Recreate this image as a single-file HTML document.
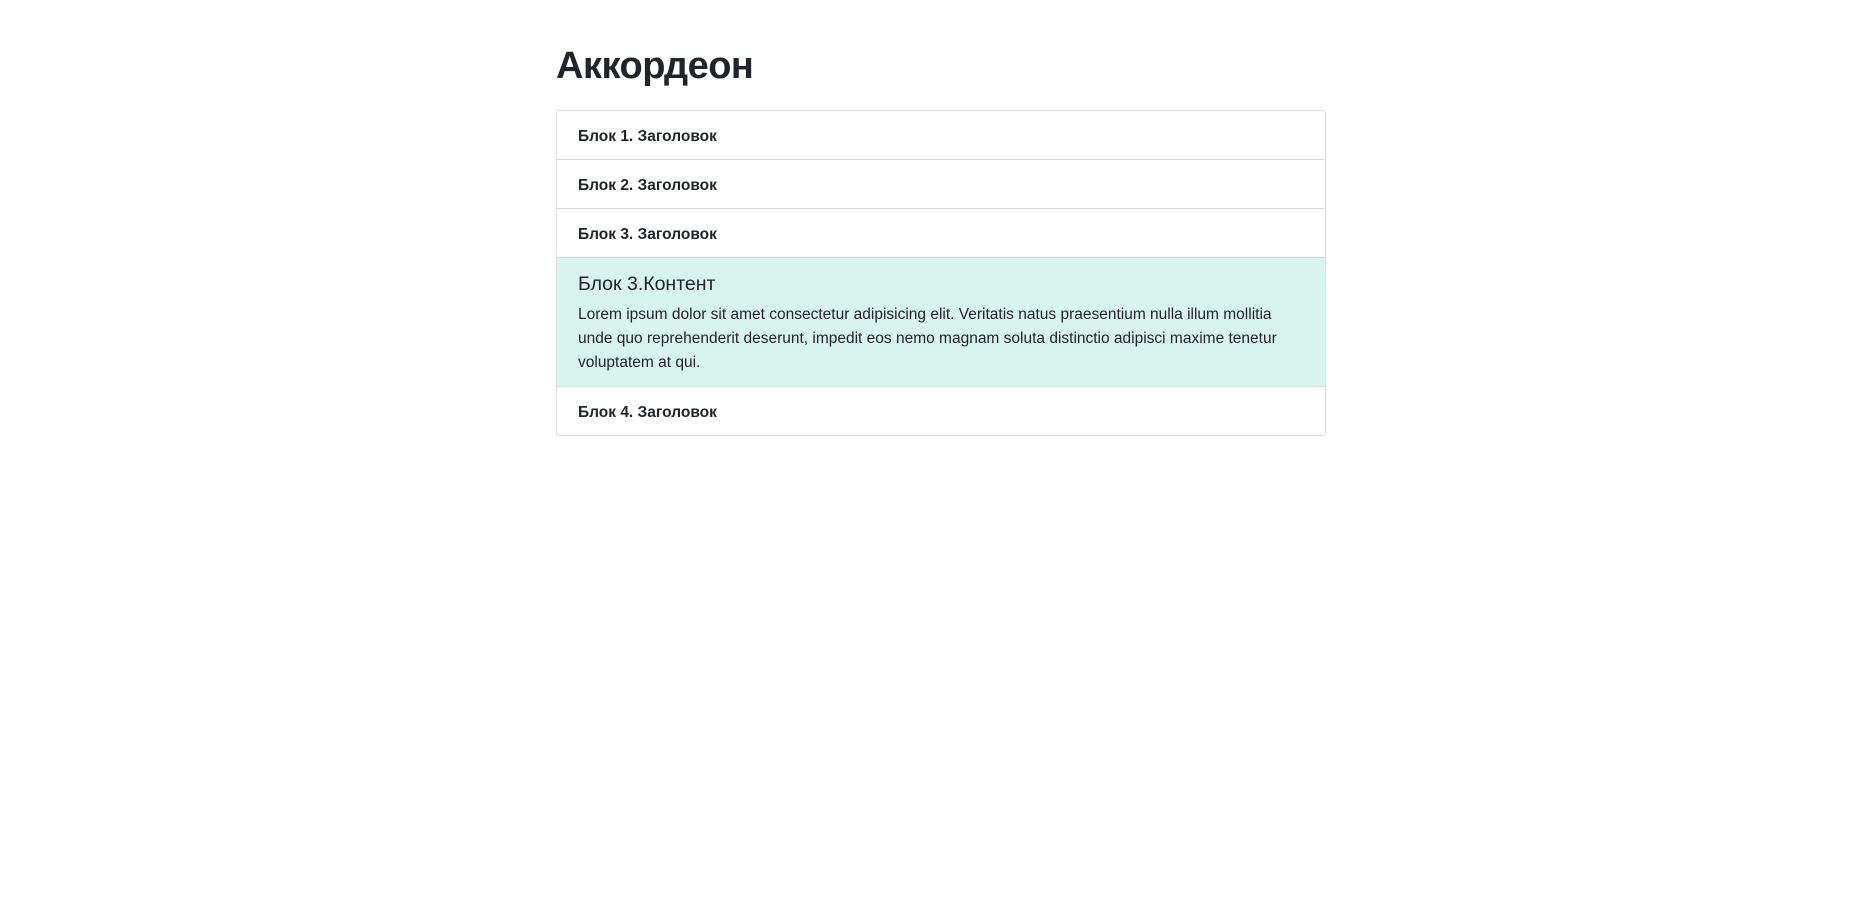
<!DOCTYPE html>
<html><head><meta charset="utf-8"><style>
body{margin:0;background:#fff;font-family:"Liberation Sans","DejaVu Sans",sans-serif;color:#212529;}
.wrap{position:absolute;left:556px;top:0;width:774px;}
h1{margin:0;position:absolute;top:42px;left:0;font-size:38px;font-weight:bold;line-height:48px;white-space:nowrap;letter-spacing:-0.5px;}
.card{position:absolute;top:110px;left:0;width:768px;border:1px solid #dcdcdc;border-radius:3px;}
.row{height:48px;border-bottom:1px solid #dcdcdc;padding-left:21px;font-weight:bold;font-size:15.5px;line-height:52px;}
.row.last{border-bottom:none;}
.content{background:#d7f4ee;height:130px;border-bottom:1px solid #cfe3de;padding:0 21px;box-sizing:border-box;border-top:1px solid #c9dcd7;}
.content h5{margin:0;padding-top:14px;font-size:19.5px;font-weight:400;line-height:24px;}
.content p{margin:7px 0 0;font-size:15.5px;line-height:24px;white-space:nowrap;}
</style></head><body>
<div class="wrap">
<h1>Аккордеон</h1>
<div class="card">
<div class="row">Блок 1. Заголовок</div>
<div class="row">Блок 2. Заголовок</div>
<div class="row" style="border-bottom:none">Блок 3. Заголовок</div>
<div class="content"><h5>Блок 3.Контент</h5>
<p>Lorem ipsum dolor sit amet consectetur adipisicing elit. Veritatis natus praesentium nulla illum mollitia<br>unde quo reprehenderit deserunt, impedit eos nemo magnam soluta distinctio adipisci maxime tenetur<br>voluptatem at qui.</p></div>
<div class="row last">Блок 4. Заголовок</div>
</div>
</div>
</body></html>
